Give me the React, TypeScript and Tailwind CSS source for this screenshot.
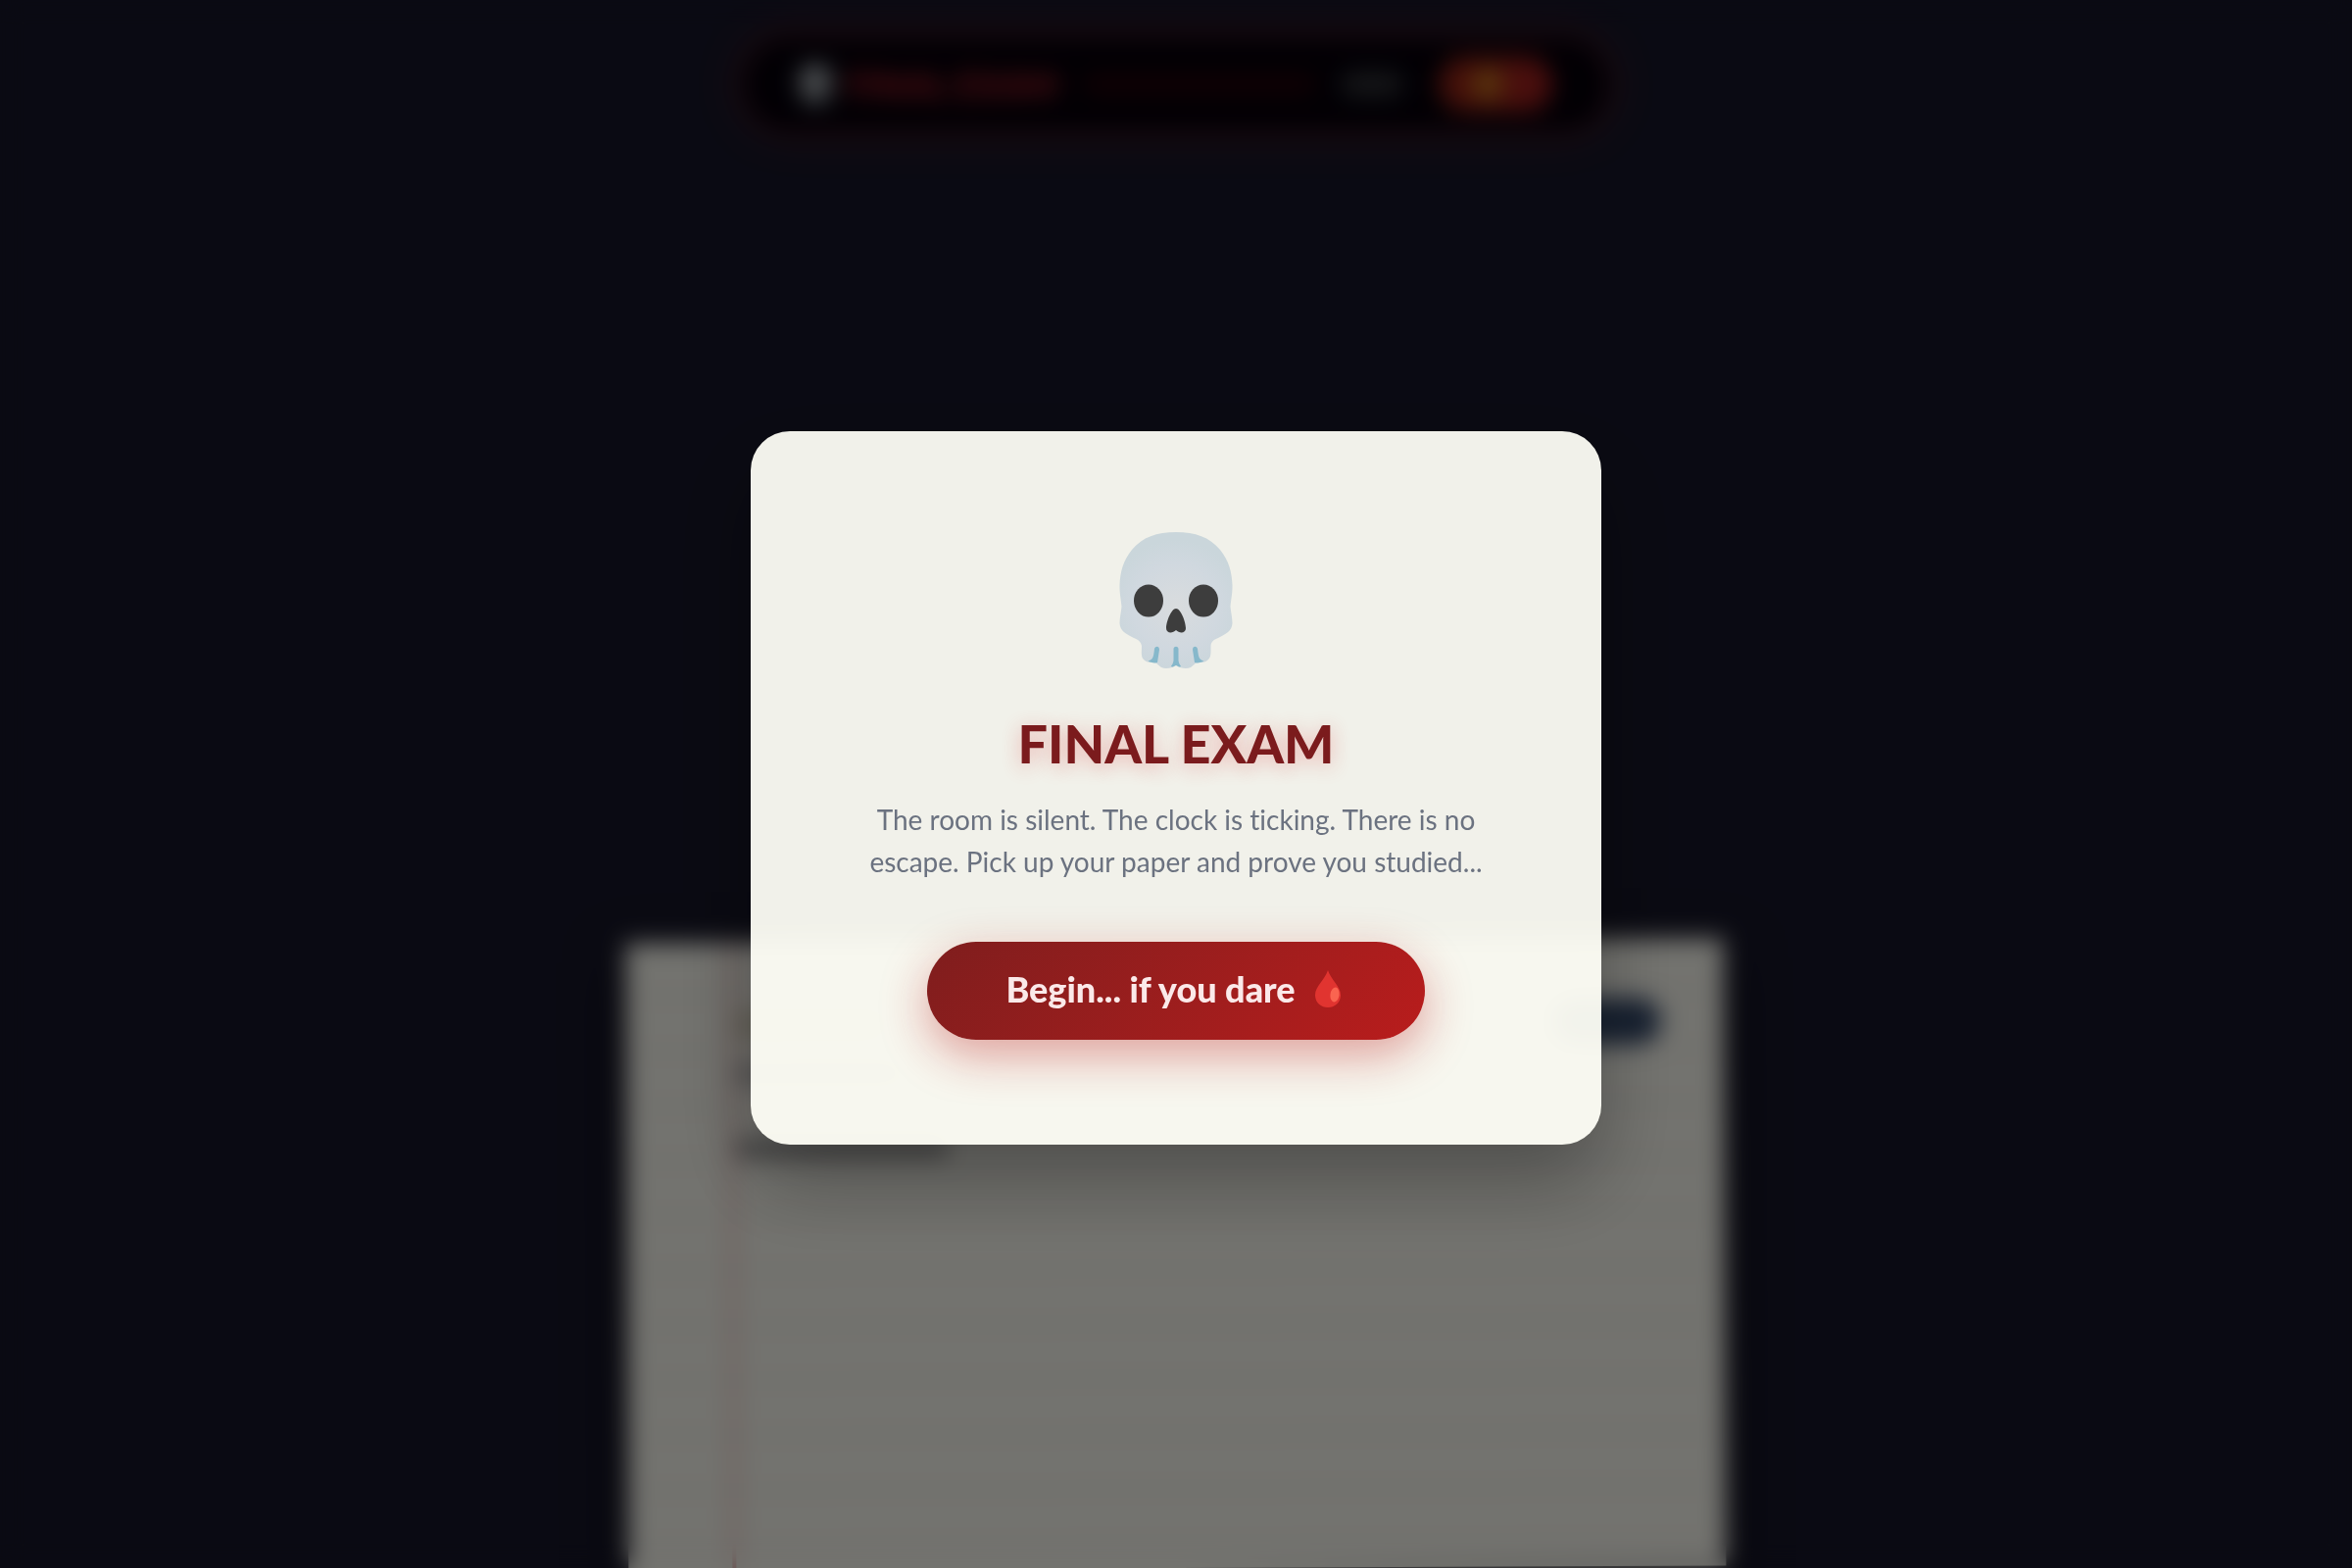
import { useId } from "react";

function Skull({ className }: { className: string }) {
  const id = useId();
  return (
    <svg viewBox="0 0 116 140" className={className} aria-hidden="true">
      <defs>
        <radialGradient id={id} cx="58" cy="76" r="68" gradientUnits="userSpaceOnUse">
          <stop offset="0" stopColor="#d9dcde" />
          <stop offset="0.65" stopColor="#d0d8df" />
          <stop offset="1" stopColor="#cad6db" />
        </radialGradient>
      </defs>
      <path
        fill={`url(#${id})`}
        d="M58 0C78 0 92 5 103 18C112 29 115 41 115.500 54C115.700 63 114 69 113.500 76C114 82 115.500 87 115.500 93C115 101 109 104 101 108C96 110 94 112 93.500 116C93.500 122 94 127 91 130C89 132 87 133 83 133C79 132 77 135 73 138C69 140 62 139 58 136C54 139 47 140 43 138C39 135 37 132 33 133C29 133 27 132 25 130C22 127 23 122 23 116C22 112 20 110 15 108C7 104 1 101 .5 93C.5 87 2 82 2.500 76C2 69 .3 63 .5 54C1 41 4 29 13 18C24 5 38 0 58 0Z"
      />
      <ellipse cx="30" cy="70" rx="15" ry="16.500" fill="#3d3d3d" />
      <ellipse cx="86" cy="70" rx="15" ry="16.500" fill="#3d3d3d" />
      <path
        fill="#3d3d3d"
        d="M58 78C53 78 48 92 48 98C48 103 54 104 58 100C62 104 68 103 68 98C68 92 63 78 58 78Z"
      />
      <g fill="#86b8cb">
        <path d="M36 119C37 116 41 116 41 120L39 133C36 134 32 133 29.500 131.500C34 130 35 129 36 119Z" />
        <path d="M55.500 119C56 116 60 116 60.500 119V131C61 135 63 136 63 137C61 138.500 59.500 136 58 136C56.500 136 55 138.500 53 137C53 136 55 135 55.500 131Z" />
        <path d="M80 119C79 116 75 116 75 120L77 133C80 134 84 133 86.500 131.500C82 130 81 129 80 119Z" />
      </g>
    </svg>
  );
}

function Drop() {
  return (
    <svg viewBox="0 0 26 38" className="h-[38px] w-[26px] shrink-0" aria-hidden="true">
      <path fill="#e13430" d="M13 0C16 10 26 16 26 25.500C26 33 20 38 13 38S0 33 0 25.500C0 16 10 10 13 0Z" />
      <ellipse cx="20" cy="25" rx="4.500" ry="7.500" fill="#fa6450" transform="rotate(8 20 25)" />
    </svg>
  );
}

function TopBar() {
  return (
    <header className="mx-auto flex h-[100px] w-full max-w-[888px] items-center rounded-full border-4 border-[#3f0d14] bg-[#04000a] px-14 shadow-[0_0_40px_rgba(127,29,29,0.4)]">
      <Skull className="h-10 w-8 shrink-0" />
      <span className="ml-4 w-60 shrink-0 font-['Lato'] text-[36px] font-black text-[#c0262c]">FINAL EXAM</span>
      <div className="h-6 grow rounded-full bg-[#240008]" />
      <div className="mr-9 ml-6 h-6 w-16 rounded-full bg-[#34363a]" />
      <div className="flex h-14 w-[116px] shrink-0 items-center justify-center rounded-full bg-linear-to-r from-[#982616] to-[#a82020]">
        <div className="mr-4 size-7 rounded-full bg-[#c98a1c]" />
      </div>
    </header>
  );
}

function ExamPaper() {
  return (
    <section className="mx-auto h-[640px] w-full max-w-[1120px] -rotate-[0.25deg] bg-[#fefef5] bg-[repeating-linear-gradient(transparent_0_54px,#f4e8e2_54px_56px)] shadow-[0_20px_60px_rgba(0,0,0,0.5)]">
      <div className="flex h-full">
        <div className="w-[110px] border-r-4 border-[#eca8a8]" />
        <div className="flex grow flex-col pt-[60px] pr-16">
          <div className="flex items-center justify-between">
            <div className="h-8 w-40 rounded-full bg-[#dcd8c4]" />
            <div className="h-12 w-28 rounded-full bg-[#34496b]" />
          </div>
          <div className="mt-4 h-5 w-44 rounded-full bg-[#b5b5b5]" />
          <div className="mt-14 h-5 w-[220px] rounded-full bg-[#9a9a9a]" />
        </div>
      </div>
    </section>
  );
}

function StartDialog() {
  return (
    <div className="fixed inset-0 flex items-center justify-center bg-black/55 px-6 pt-2 backdrop-blur-[12px]">
      <div
        role="dialog"
        aria-labelledby="exam-title"
        className="flex w-full max-w-[868px] flex-col items-center rounded-[40px] bg-[#fefef5]/95 px-8 pt-[103px] pb-[107px] text-center shadow-[0_40px_80px_rgba(0,0,0,0.3)]"
      >
        <Skull className="h-[140px] w-[116px]" />
        <h1
          id="exam-title"
          className="mt-11 font-['Lato'] text-[54px] leading-[64px] font-black text-[#7b1b1d] [text-shadow:0_4px_20px_rgba(220,38,38,0.3)]"
        >
          FINAL EXAM
        </h1>
        <p className="mt-6 max-w-[660px] font-['Lato'] text-[28px] leading-[43px] text-[#6b7280] [font-variant-ligatures:none]">
          The room is silent. The clock is ticking. There is no escape. Pick up your paper and prove you studied...
        </p>
        <button
          type="button"
          className="mt-[60px] flex h-[100px] items-center gap-5 rounded-full bg-linear-135 from-[#7f1d1d] to-[#b91c1c] pr-[86px] pb-1 pl-20 font-['Lato'] text-[36px] font-black text-[#fbe9e9] shadow-[0_16px_48px_rgba(185,28,28,0.4)]"
        >
          Begin... if you dare
          <Drop />
        </button>
      </div>
    </div>
  );
}

export default function App() {
  return (
    <main className="h-screen overflow-hidden bg-[#18182a]">
      <div className="flex flex-col gap-[824px] pt-9">
        <TopBar />
        <ExamPaper />
      </div>
      <StartDialog />
    </main>
  );
}
